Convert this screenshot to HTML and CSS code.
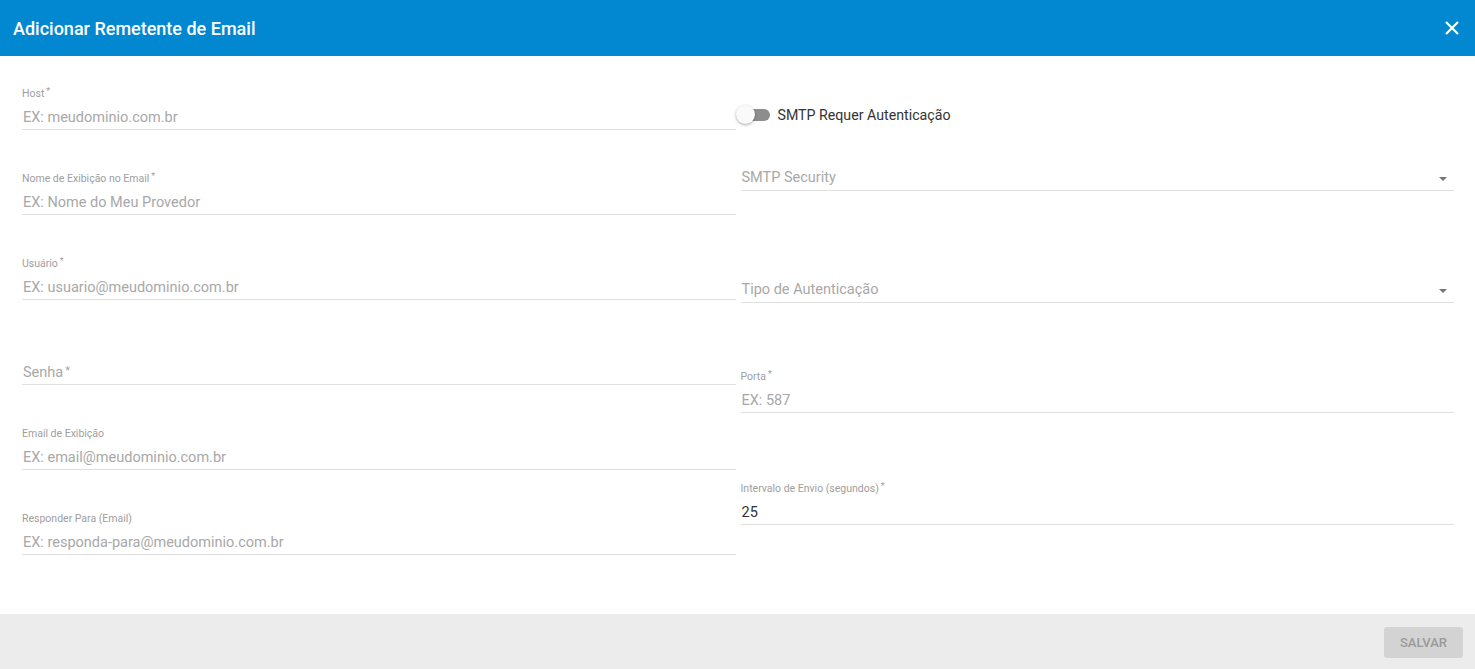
FILE: index.html
```html
<!DOCTYPE html>
<html>
<head lang="pt">
    <meta charset="utf-8">
    <title>Adicionar Remetente de Email</title>
    <link rel="stylesheet" href="styles.css">
</head>
<body>
<div class="dialog">
    <div class="dialog-title">
        <span>Adicionar Remetente de Email</span>
        <svg class="close" width="14" height="14" viewBox="0 0 14 14">
            <path d="M1 1 L13 13 M13 1 L1 13" stroke="#fff" stroke-width="2.2" fill="none"/>
        </svg>
    </div>

    <div class="dialog-body">
        <div class="col left">
            <div class="field">
                <label class="label">Host<sup>*</sup></label>
                <div class="input placeholder">EX: meudominio.com.br</div>
            </div>
            <div class="field">
                <label class="label">Nome de Exibição no Email<sup>*</sup></label>
                <div class="input placeholder">EX: Nome do Meu Provedor</div>
            </div>
            <div class="field">
                <label class="label">Usuário<sup>*</sup></label>
                <div class="input placeholder">EX: usuario@meudominio.com.br</div>
            </div>
            <div class="field">
                <label class="label"></label>
                <div class="input placeholder">Senha<sup>*</sup></div>
            </div>
            <div class="field">
                <label class="label">Email de Exibição</label>
                <div class="input placeholder">EX: email@meudominio.com.br</div>
            </div>
            <div class="field">
                <label class="label">Responder Para (Email)</label>
                <div class="input placeholder">EX: responda-para@meudominio.com.br</div>
            </div>
        </div>

        <div class="col right">
            <div class="toggle-row">
                <span class="switch"><span class="track"></span><span class="thumb"></span></span>
                <span class="toggle-text">SMTP Requer Autenticação</span>
            </div>
            <div class="input select placeholder smtp">SMTP Security<span class="arrow"></span></div>
            <div class="input select placeholder auth">Tipo de Autenticação<span class="arrow"></span></div>
            <div class="field porta">
                <label class="label">Porta<sup>*</sup></label>
                <div class="input placeholder">EX: 587</div>
            </div>
            <div class="field intervalo">
                <label class="label">Intervalo de Envio (segundos)<sup>*</sup></label>
                <div class="input value">25</div>
            </div>
        </div>
    </div>

    <div class="dialog-actions">
        <div class="button">SALVAR</div>
    </div>
</div>
</body>
</html>
```

FILE: styles.css
```css
html, body {
    margin: 0;
    padding: 0;
    height: 100%;
}

body {
    font-family: Roboto, "Liberation Sans", sans-serif;
    background: #fff;
}

.dialog {
    height: 100vh;
    display: flex;
    flex-direction: column;
}

.dialog-title {
    height: 56px;
    flex: none;
    background: #0288d1;
    color: #fff;
    font-size: 18px;
    font-weight: 500;
    padding: 0 16px 0 13px;
    display: flex;
    align-items: center;
    justify-content: space-between;
}

.close {
    display: block;
}

.dialog-body {
    flex: 1;
    padding: 31px 21px 0 22px;
    display: grid;
    grid-template-columns: 1fr 1fr;
    column-gap: 5px;
    align-items: start;
}

.left .field + .field {
    margin-top: 42px;
}

.label {
    display: block;
    height: 14px;
    line-height: 14px;
    font-size: 10.5px;
    color: #9e9e9e;
}

.label sup,
.input sup {
    font-size: 9px;
    vertical-align: top;
    position: relative;
    top: -3px;
    margin-left: 2px;
}

.input sup {
    font-size: 11px;
    top: -2px;
}

.input {
    font-size: 14.5px;
    line-height: 20px;
    padding: 7px 0 1px 1px;
    border-bottom: 1px solid #e0e0e0;
}

.placeholder {
    color: #a8a8a8;
}

.value {
    color: #333;
}

.toggle-row {
    margin-top: 18px;
    height: 20px;
    display: flex;
    align-items: center;
}

.switch {
    position: relative;
    width: 34px;
    height: 20px;
    margin-left: -5px;
}

.track {
    position: absolute;
    left: 6px;
    top: 4px;
    width: 28px;
    height: 12px;
    border-radius: 6px;
    background: #8d8d8d;
}

.thumb {
    position: absolute;
    left: 0;
    top: 0;
    width: 19px;
    height: 19px;
    border-radius: 50%;
    background: #fafafa;
    box-shadow: 0 1px 3px rgba(0, 0, 0, 0.35);
}

.toggle-text {
    margin-left: 8px;
    font-size: 14.2px;
    color: #333;
}

.select {
    position: relative;
    padding-bottom: 2px;
}

.arrow {
    position: absolute;
    right: 7px;
    top: 16px;
    border-left: 4.5px solid transparent;
    border-right: 4.5px solid transparent;
    border-top: 4.5px solid #757575;
}

.smtp {
    margin-top: 36px;
}

.auth {
    margin-top: 82px;
}

.porta {
    margin-top: 67px;
}

.intervalo {
    margin-top: 69px;
}

.dialog-actions {
    height: 55px;
    flex: none;
    background: #ececec;
    display: flex;
    justify-content: flex-end;
    align-items: center;
    padding: 0 12px;
}

.button {
    width: 79px;
    height: 31px;
    line-height: 31px;
    text-align: center;
    border-radius: 3px;
    background: #d3d3d3;
    color: #9a9a9a;
    font-size: 13px;
    font-weight: 500;
    margin-top: 2px;
    cursor: pointer;
    -webkit-user-select: none;
}
```
